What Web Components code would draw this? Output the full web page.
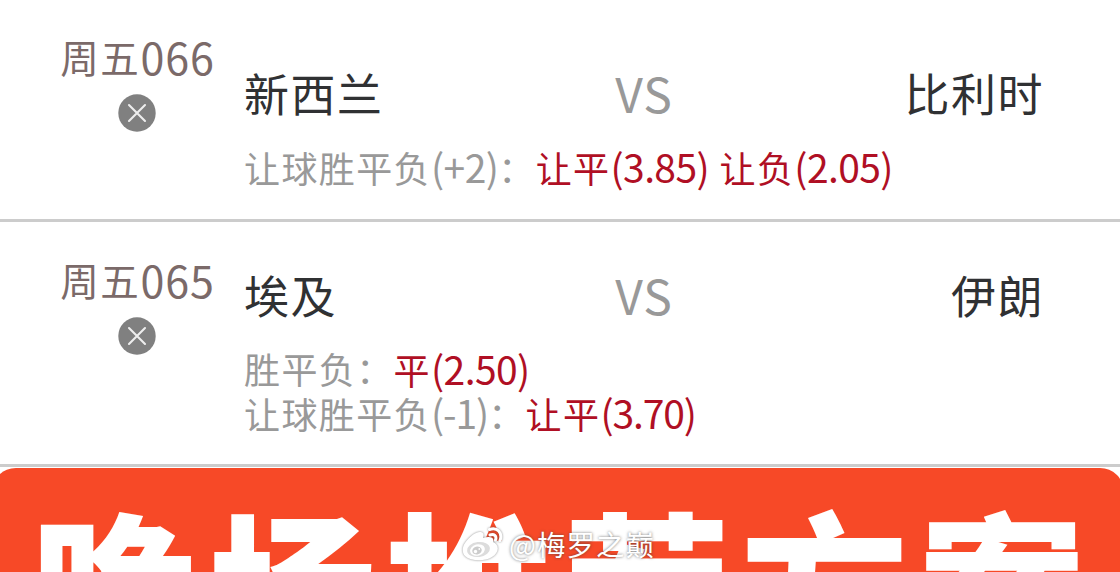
<!DOCTYPE html>
<html lang="zh-CN">
<head>
<meta charset="utf-8">
<title>赛事方案</title>
<style>
    body {
        margin: 0;
        height: 572px;
        overflow: hidden;
        background: #fff;
        font-family: "Noto Sans CJK SC", sans-serif;
    }
</style>
</head>
<body>
<app-page>
    <match-row style="--height: 219px; --label-top: 34px; --title-top: 63px" codigo="周五066" casa="新西兰" fora="比利时">
        <bet-line tipo="让球胜平负(+2)：" palpite="让平(3.85) 让负(2.05)"></bet-line>
    </match-row>
    <match-row style="--height: 242px; --label-top: 35px; --title-top: 43px" codigo="周五065" casa="埃及" fora="伊朗">
        <bet-line tipo="胜平负：" palpite="平(2.50)"></bet-line>
        <bet-line style="--n-space: -1.1px" tipo="让球胜平负(-1)：" palpite="让平(3.70)"></bet-line>
    </match-row>
    <promo-banner>晚场推荐方案</promo-banner>
    <weibo-mark slot="mark">@梅罗之巅</weibo-mark>
</app-page>

<script>
// latin runs are set slightly larger than the chinese ones
function runs(text) {
    return text.replace(/[\x21-\x7e]+/g, '<span class="n">$&</span>');
}

class AppPage extends HTMLElement {
    constructor() {
        super();
        this.attachShadow({ mode: 'open' }).innerHTML = `
        <style>
            :host {
                display: flex;
                flex-direction: column;
                position: relative;
                height: 572px;
                overflow: hidden;
            }
            .mark {
                position: absolute;
                left: 461px;
                top: 525px;
            }
        </style>
        <slot></slot>
        <div class="mark"><slot name="mark"></slot></div>
        `;
    }
}

class CloseIcon extends HTMLElement {
    constructor() {
        super();
        this.attachShadow({ mode: 'open' }).innerHTML = `
        <style>
            :host { display: block; width: 38px; height: 38px; }
            svg { display: block; }
        </style>
        <svg width="38" height="38" viewBox="0 0 38 38">
            <circle cx="19" cy="19" r="18.7" fill="#808080"/>
            <path d="M11 11L27 27M27 11L11 27" stroke="#eee" stroke-width="2.1" stroke-linecap="round"/>
        </svg>
        `;
    }
}

class MatchRow extends HTMLElement {
    constructor() {
        super();
        this.attachShadow({ mode: 'open' });
    }

    connectedCallback() {
        this.shadowRoot.innerHTML = `
        <style>
            :host {
                display: flex;
                flex: none;
                height: var(--height);
                border-bottom: 3px solid #ccc;
            }
            .side {
                display: flex;
                flex-direction: column;
                align-items: center;
                box-sizing: border-box;
                width: 244px;
                flex: none;
                padding: var(--label-top) 15px 0 45px;
                gap: 20px;
            }
            .code {
                height: 40px;
                line-height: 40px;
                font-size: 38.5px;
                letter-spacing: 1.6px;
                padding-left: 1px;
                color: #7b6a69;
                white-space: nowrap;
            }
            .code .n {
                position: relative;
                top: 2px;
                font-size: 43px;
                letter-spacing: .9px;
            }
            .body {
                width: 800px;
                padding-top: var(--title-top);
            }
            .teams {
                display: grid;
                grid-template-columns: 1fr auto 1fr;
                height: 60px;
                line-height: 60px;
                font-size: 45px;
                letter-spacing: 1.5px;
                color: #303133;
            }
            .vs {
                position: relative;
                top: -1px;
                font-size: 48px;
                letter-spacing: 1px;
                color: #999;
            }
            .away { text-align: right; }
            .lines { padding-top: 21px; }
        </style>
        <div class="side">
            <div class="code">${runs(this.getAttribute('codigo'))}</div>
            <close-icon></close-icon>
        </div>
        <div class="body">
            <div class="teams">
                <span>${this.getAttribute('casa')}</span>
                <span class="vs">VS</span>
                <span class="away">${this.getAttribute('fora')}</span>
            </div>
            <div class="lines"><slot></slot></div>
        </div>
        `;
    }
}

class BetLine extends HTMLElement {
    constructor() {
        super();
        this.attachShadow({ mode: 'open' });
    }

    connectedCallback() {
        this.shadowRoot.innerHTML = `
        <style>
            :host {
                display: flex;
                height: 44px;
                line-height: 44px;
                font-size: 36px;
                letter-spacing: 1.4px;
                white-space: nowrap;
            }
            .n { font-size: 39px; letter-spacing: var(--n-space, -.6px); }
            .type { color: #999; }
            .pick { color: #b00f24; word-spacing: 1px; }
        </style>
        <span class="type">${runs(this.getAttribute('tipo'))}</span>
        <span class="pick">${runs(this.getAttribute('palpite'))}</span>
        `;
    }
}

class PromoBanner extends HTMLElement {
    constructor() {
        super();
        this.attachShadow({ mode: 'open' }).innerHTML = `
        <style>
            :host {
                display: block;
                flex: none;
                height: 240px;
                margin: 1px -4px 0 -8px;
                padding: 20px 0 0 39px;
                box-sizing: border-box;
                border-radius: 24px;
                background: #f74927;
                color: #fff;
                font-size: 168px;
                font-weight: 900;
                line-height: 190px;
                letter-spacing: 9.4px;
                white-space: nowrap;
            }
        </style>
        <slot></slot>
        `;
    }
}

class WeiboMark extends HTMLElement {
    constructor() {
        super();
        this.attachShadow({ mode: 'open' }).innerHTML = `
        <style>
            :host {
                display: flex;
                align-items: center;
                gap: 5px;
                height: 38px;
                color: #fff;
                font-size: 28.5px;
                line-height: 38px;
                letter-spacing: 1px;
                white-space: nowrap;
                text-shadow: 0 0 3px rgba(60, 60, 60, .75);
            }
            svg { display: block; filter: drop-shadow(0 0 1.2px rgba(60, 60, 60, .6)); }
        </style>
        <svg width="43" height="38" viewBox="0 0 43 38" fill="none">
            <path d="M4 18C8 12 15 6 20 7C23 8 23 10 22 13C28 11 34 12 32 17C39 20 38 28 31 32C24 36.500 10 36.500 4 31C1 28 1 22 4 18Z" fill="#fff"/>
            <ellipse cx="17.500" cy="24.500" rx="11.500" ry="7.500" fill="#dcdcdc" transform="rotate(-7 17.500 24.500)"/>
            <ellipse cx="16.500" cy="25" rx="7.500" ry="5.700" fill="#fff" transform="rotate(-15 16.500 25)"/>
            <ellipse cx="16" cy="25.500" rx="4.800" ry="4" fill="#ccc" transform="rotate(-15 16 25.500)"/>
            <circle cx="14.500" cy="26.500" r="1.700" fill="#fff"/>
            <circle cx="18.300" cy="24" r=".9" fill="#fff"/>
            <path d="M28.500 4.500C36 1.500 42 8 39 15.500M29 10C33 8.500 36 11 34.500 15" stroke="#fff" stroke-width="3" stroke-linecap="round"/>
        </svg>
        <span><slot></slot></span>
        `;
    }
}

customElements.define('app-page', AppPage);
customElements.define('close-icon', CloseIcon);
customElements.define('match-row', MatchRow);
customElements.define('bet-line', BetLine);
customElements.define('promo-banner', PromoBanner);
customElements.define('weibo-mark', WeiboMark);
</script>
</body>
</html>
